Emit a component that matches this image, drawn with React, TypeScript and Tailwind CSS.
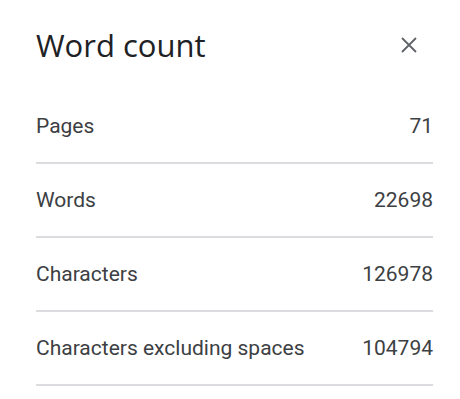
const rows = [
  { label: 'Pages', value: '71' },
  { label: 'Words', value: '22698' },
  { label: 'Characters', value: '126978' },
  { label: 'Characters excluding spaces', value: '104794' },
];

export default function App() {
  return (
    <div className="w-[460px] h-[399px] bg-white pl-[36px] pr-[27px] font-['Roboto',sans-serif]">
      <div className="h-[90px] flex items-center justify-between">
        <h1 className="text-[31px] text-[#202124] leading-none font-['Open_Sans',sans-serif]">Word count</h1>
        <button className="w-[24px] h-[24px] mr-[12px] flex items-center justify-center text-[#5f6368]">
          <svg width="16" height="16" viewBox="0 0 16 16" fill="none" stroke="currentColor" strokeWidth="1.8">
            <path d="M1 1 L15 15 M15 1 L1 15" />
          </svg>
        </button>
      </div>
      {rows.map((r) => (
        <div key={r.label} className="h-[74px] pt-[2px] flex items-center justify-between border-b-2 border-[#dadce0] text-[21px] text-[#3c4043]">
          <span>{r.label}</span>
          <span>{r.value}</span>
        </div>
      ))}
    </div>
  );
}
